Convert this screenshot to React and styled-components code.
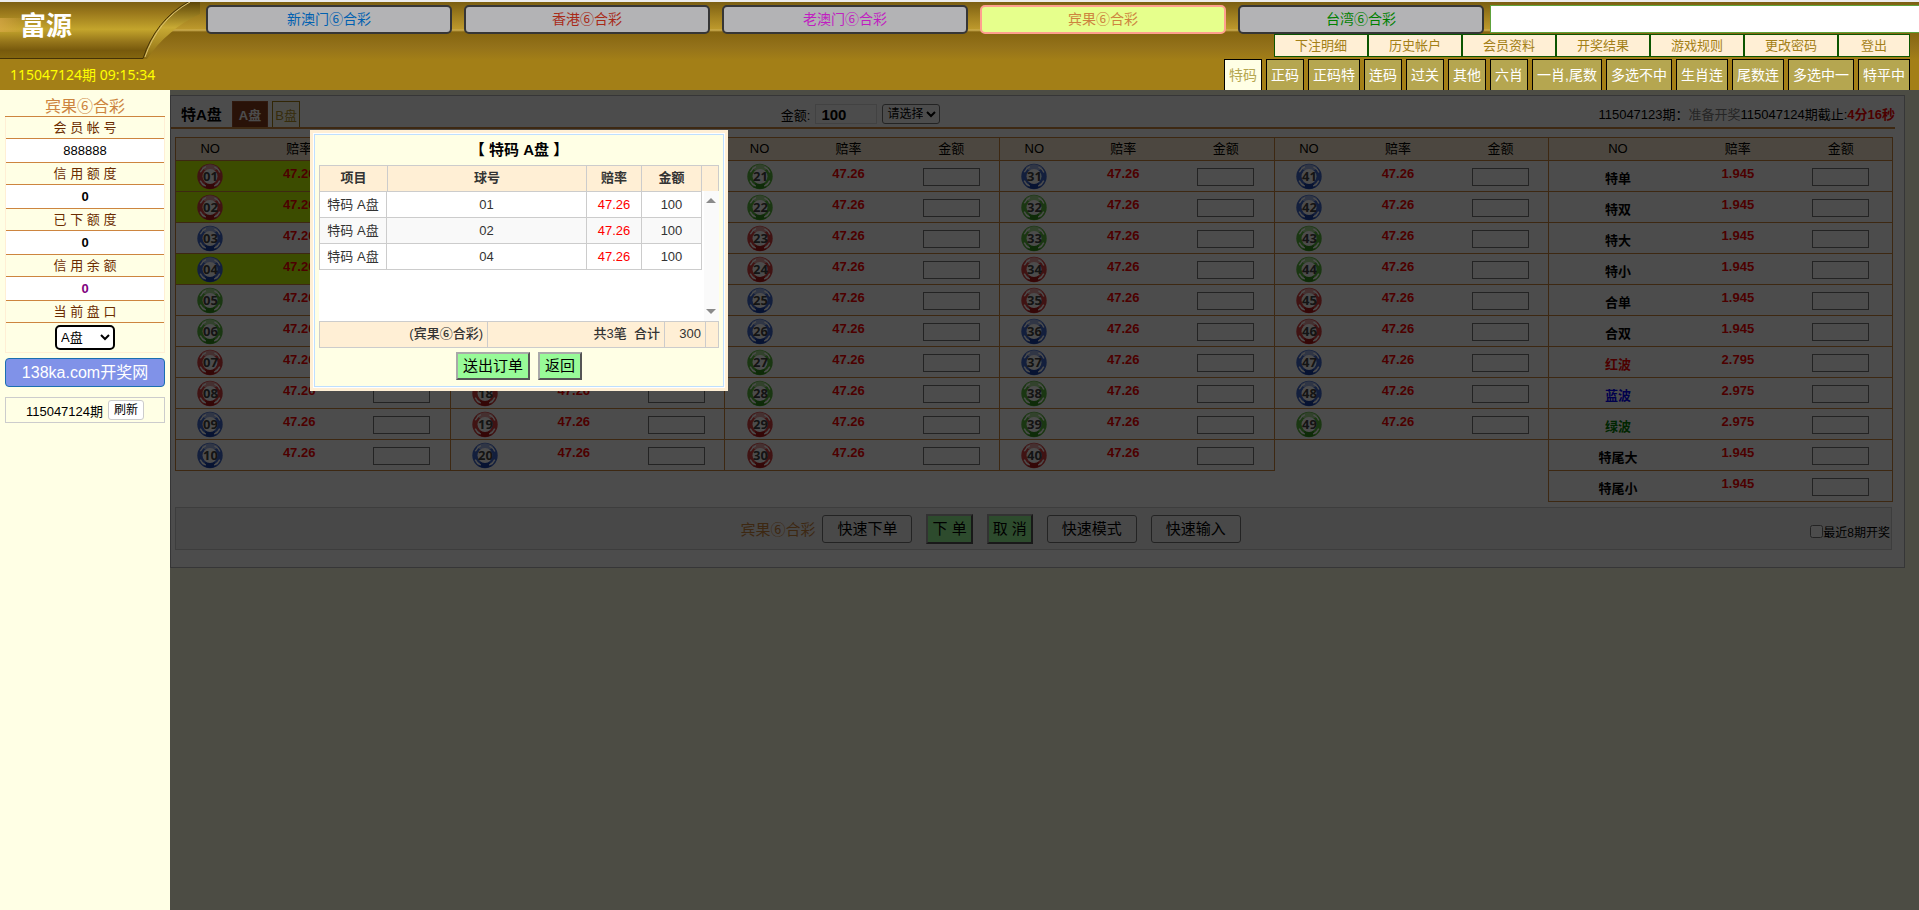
import React, { useState } from "react";
import styled, { createGlobalStyle, css } from "styled-components";

const GlobalStyle = createGlobalStyle`
  * {
    box-sizing: border-box;
  }
  body {
    margin: 0;
    background-color: #ffffe5;
    color: #000;
    font-family: "Liberation Sans", "Noto Sans CJK SC", sans-serif;
    font-size: 13px;
  }
  button, input, select {
    font-family: inherit;
    margin: 0;
  }
`;

// Layout
const Page = styled.div`
  min-height: 100vh;
  display: flex;
  flex-direction: column;
  border-top: 2px solid #ececec;
`;

const Body = styled.div`
  flex: 1;
  display: flex;
`;

// Header
const Header = styled.header`
  display: flex;
  height: 88px;
  background: linear-gradient(
    #7b5f12 0,
    #9d7c1e 13px,
    #bd992c 27px,
    #d0b155 28px,
    #856510 30px,
    #94721a 45px,
    #a37f17 58px
  );
`;

const Brand = styled.div`
  flex: 0 0 206px;
`;

const Logo = styled.h1`
  position: relative;
  height: 57px;
  margin: 0;
  padding-left: 20px;
  color: #fff;
  font-size: 26px;
  line-height: 48px;

  svg {
    position: absolute;
    left: 0;
    top: 0;
  }
  span {
    position: relative;
  }
`;

const Clock = styled.div`
  padding-left: 10px;
  color: #ff0;
  font-family: "Noto Sans", "Noto Sans CJK SC", sans-serif;
  font-size: 14px;
  line-height: 31px;
`;

const HeaderRight = styled.div`
  flex: 1;
  min-width: 0;
  display: flex;
  flex-direction: column;
  align-items: flex-end;
  padding-top: 3px;
`;

const Lotteries = styled.nav`
  width: 100%;
  display: flex;
  gap: 12px;
`;

const LotteryTab = styled.button`
  flex: 0 1 246px;
  height: 29px;
  padding: 0;
  border: 2px solid ${({ $active }) => ($active ? "#ff9f8f" : "#363636")};
  border-radius: 5px;
  background-color: ${({ $active }) => ($active ? "#e6ff8c" : "#b3b3b5")};
  color: ${({ $color }) => $color};
  font-size: 14px;
  line-height: 23px;
  cursor: pointer;
`;

const Notice = styled.div`
  flex: 1;
  height: 28px;
  margin-left: -6px;
  border: 1px solid #5ea23c;
  border-right: none;
  background-color: #fff;
`;

const Menu = styled.nav`
  display: flex;
  margin-right: 9px;
`;

const MenuLink = styled.a`
  width: ${({ $short }) => ($short ? 72 : 94)}px;
  border: 1px solid #0b5500;
  background-color: #ffefd5;
  color: #a37f17;
  line-height: 21px;
  text-align: center;
  text-decoration: none;
`;

const Plays = styled.nav`
  display: flex;
  gap: 4px;
  margin: 2px 9px 0 0;
`;

const PlayLink = styled.a`
  height: 31px;
  padding: 0 4px;
  border: 1px solid #000;
  border-bottom: none;
  background-color: ${({ $active }) => ($active ? "#ffffe5" : "#b5a650")};
  color: ${({ $active }) => ($active ? "#b5a650" : "#fff")};
  font-size: 14px;
  line-height: 31px;
  text-decoration: none;
`;

// Sidebar
const Sidebar = styled.aside`
  flex: 0 0 170px;
  padding: 5px;
  background-color: #ffffe5;
  text-align: center;
`;

const SideTitle = styled.h2`
  height: 22px;
  margin: 0;
  border-bottom: 1px solid #cd853f;
  color: #cd853f;
  font-size: 16px;
  font-weight: normal;
  line-height: 24px;
`;

const Account = styled.dl`
  margin: 0;
  border: 1px solid #ffefd5;
  border-top: none;
`;

const AccountLabel = styled.dt`
  border-bottom: 1px solid #cd853f;
  color: #6b2c00;
  line-height: 21px;
`;

const AccountValue = styled.dd`
  margin: 0;
  border-bottom: 1px solid #cd853f;
  background-color: #fff;
  color: ${({ $color }) => $color || "#000"};
  font-weight: ${({ $bold }) => ($bold ? "bold" : "normal")};
  line-height: 23px;
`;

const AccountSelect = styled.dd`
  margin: 0;
  padding: 2px 0;

  select {
    display: block;
    width: 60px;
    height: 25px;
    margin: 0 auto;
    border: 2px solid #000;
    border-radius: 5px;
    background-color: #fff;
    font-size: 13px;
  }
`;

const SiteLink = styled.a`
  display: block;
  margin-top: 5px;
  border: 1px solid #1a6fb0;
  border-radius: 4px;
  background-color: #8092e8;
  color: #fff;
  font-size: 16px;
  line-height: 27px;
  text-decoration: none;
`;

const Refresh = styled.div`
  display: flex;
  justify-content: center;
  align-items: center;
  gap: 5px;
  height: 26px;
  margin-top: 10px;
  border: 1px solid #ccc;

  button {
    height: 20px;
    padding: 0 5px;
    border: 1px solid #ccc;
    border-radius: 3px;
    background-color: #fff;
    font-size: 12px;
    line-height: 18px;
  }
`;

// Betting panel
const Main = styled.main`
  position: relative;
  flex: 1;
  min-width: 0;
`;

const Panel = styled.section`
  margin: 5px 14px 0 0;
  padding-bottom: 17px;
  border: 1px solid #b4b4b8;
  background-color: #fff;
`;

const Toolbar = styled.div`
  display: grid;
  grid-template-columns: 20% 40% 40%;
  grid-template-rows: 31px;
  margin-right: 9px;
  border-bottom: 2px solid #cd853f;
`;

const ToolbarLeft = styled.div`
  display: flex;
  align-items: flex-end;
  gap: 4px;
  padding-left: 10px;

  strong {
    margin-right: 6px;
    font-size: 15px;
    line-height: 25px;
  }
`;

const PanButton = styled.button`
  height: 26px;
  padding: 0 ${({ $active }) => ($active ? 6 : 2)}px;
  border: 1px solid ${({ $active }) => ($active ? "#a0522d" : "#a37f17")};
  border-bottom: none;
  background-color: ${({ $active }) => ($active ? "#8b3f1c" : "#fffff0")};
  color: ${({ $active }) => ($active ? "#fff" : "#b5932b")};
  font-size: 13px;
  font-weight: ${({ $active }) => ($active ? "bold" : "normal")};
`;

const QuickAmount = styled.div`
  display: flex;
  justify-content: center;
  align-items: center;
  gap: 5px;
  padding-top: 5px;

  input {
    width: 62px;
    height: 20px;
    padding: 0 5px;
    border: 1px solid #ddd;
    font-size: 15px;
    font-weight: bold;
  }
  select {
    width: 58px;
    height: 20px;
    border: 1px solid #767676;
    border-radius: 3px;
    background-color: #fff;
    font-size: 12px;
  }
`;

const Deadline = styled.div`
  text-align: right;
  line-height: 38px;

  span {
    color: #808080;
  }
  strong {
    color: #f00;
  }
`;

const Groups = styled.div`
  display: flex;
  align-items: flex-start;
  margin: 8px 11px 0 4px;
`;

const GroupBox = styled.div`
  flex: ${({ $grow }) => $grow} 1 0;
  min-width: 0;

  & + & {
    margin-left: -1px;
  }
`;

const Table = styled.table`
  width: 100%;
  table-layout: fixed;
  border: 1px solid #cd853f;
  border-bottom: none;
  border-spacing: 0;
`;

const HeadCell = styled.th`
  width: ${({ $width }) => $width};
  height: 23px;
  padding: 0;
  border-bottom: 1px solid #cd853f;
  background-color: #ffefd5;
  font-weight: normal;
  line-height: 21px;
  vertical-align: top;
`;

const Row = styled.tr`
  background-color: ${({ $picked }) => ($picked ? "#c8ff00" : "#fff")};
`;

const Cell = styled.td`
  height: 31px;
  padding: 0;
  border-bottom: 1px solid #cd853f;
  text-align: center;
  vertical-align: top;

  svg {
    display: block;
    margin: 2px auto 0;
  }
  input {
    width: 57px;
    height: 18px;
    margin-top: 7px;
    border: 1px solid #767676;
    background-color: #fff;
    display: inline-block;
    vertical-align: top;
  }
`;

const NameCell = styled(Cell)`
  padding-top: 5px;
  color: ${({ $color }) => $color || "#000"};
  font-weight: bold;
  line-height: 25px;
`;

const RateCell = styled(Cell)`
  color: #f00;
  font-weight: bold;
  line-height: 26px;
`;

const ActionBar = styled.div`
  display: flex;
  align-items: center;
  height: 43px;
  margin: 5px 12px 0 4px;
  padding-right: 1px;
  border: 1px solid #ccc;
  background-color: #f2f2f2;
`;

const Actions = styled.div`
  flex: 1;
  display: flex;
  justify-content: center;
  align-items: center;
  gap: 14px;

  span {
    margin-right: -7px;
    color: #cd853f;
    font-size: 15px;
  }
`;

const PlainButton = styled.button`
  width: 90px;
  height: 28px;
  padding: 0;
  border: 1px solid #767676;
  border-radius: 3px;
  background-color: #f4f4f4;
  color: #000;
  font-size: 15px;
  line-height: 24px;
  cursor: pointer;
`;

const raised = css`
  border: 2px solid;
  border-color: #a9a9a9 #555 #555 #a9a9a9;
  background-color: #98fb98;
  color: #000;
  font-size: 15px;
  cursor: pointer;
`;

const GreenButton = styled.button`
  height: 30px;
  padding: 0 4px;
  line-height: 24px;
  ${raised}
`;

const Recent = styled.label`
  display: flex;
  align-items: center;
  margin-left: 5px;
  padding-top: 5px;
  font-size: 12px;

  input {
    width: 13px;
    height: 13px;
  }
`;

// Order confirmation
const Overlay = styled.div`
  position: absolute;
  inset: 0;
  background-color: rgba(0, 0, 0, 0.7);
`;

const Dialog = styled.div`
  position: absolute;
  left: 140px;
  top: 40px;
  width: 418px;
  padding: 3px;
  border: 1px solid #ffefd5;
  background-color: #ffefd5;
`;

const DialogInner = styled.div`
  padding: 0 4px 6px;
  border: 1px solid #bfdfff;
  outline: 1px solid #fff;
  background-color: #ffffe5;
`;

const DialogTitle = styled.h3`
  margin: 0;
  font-size: 15px;
  line-height: 30px;
  text-align: center;
`;

const OrderTable = styled.table`
  width: 100%;
  table-layout: fixed;
  border-collapse: collapse;
  color: #333;

  th, td {
    height: 26px;
    padding: 0;
    border: 1px solid #ccc;
    line-height: 20px;
    text-align: center;
  }
  th {
    background-color: #ffefd5;
    line-height: 23px;
    vertical-align: top;
  }
`;

const OrderRows = styled.div`
  display: flex;
  height: 130px;
  background-color: #fff;
  margin-top: -1px;

  ${OrderTable} {
    width: 383px;
    align-self: flex-start;
  }
  tr:nth-child(even) {
    background-color: #f9f9f9;
  }
  td:nth-child(3) {
    color: #f00;
  }
`;

const ScrollTrack = styled.div`
  display: flex;
  flex-direction: column;
  justify-content: space-between;
  width: 15px;
  margin-left: auto;
  padding: 7px 2px;
  background-color: #fafafa;
`;

const ScrollArrow = styled.i`
  width: 10px;
  border: 5px solid transparent;
  border-top: ${({ $down }) => ($down ? "5px solid #8a8a8a" : "none")};
  border-bottom: ${({ $down }) => ($down ? "none" : "5px solid #8a8a8a")};
`;

const TotalTable = styled(OrderTable)`
  td {
    padding-right: 4px;
    background-color: #ffefd5;
    font-weight: 500;
    line-height: 23px;
    text-align: right;
    vertical-align: top;
    white-space: pre;
  }
`;

const DialogButtons = styled.div`
  display: flex;
  justify-content: center;
  gap: 8px;
  margin-top: 4px;
`;

const DialogButton = styled.button`
  height: 28px;
  padding: 0 5px;
  line-height: 24px;
  ${raised}
`;

const lotteries = [
  { name: "新澳门⑥合彩", color: "#0060b0" },
  { name: "香港⑥合彩", color: "#a82a18" },
  { name: "老澳门⑥合彩", color: "#c01fc0" },
  { name: "宾果⑥合彩", color: "#cd853f", active: true },
  { name: "台湾⑥合彩", color: "#008000" },
];

const menu = ["下注明细", "历史帐户", "会员资料", "开奖结果", "游戏规则", "更改密码", "登出"];

const plays = [
  "特码", "正码", "正码特", "连码", "过关", "其他", "六肖",
  "一肖,尾数", "多选不中", "生肖连", "尾数连", "多选中一", "特平中",
];

const account = [
  { label: "会 员 帐 号", value: "888888" },
  { label: "信 用 额 度", value: "0", bold: true },
  { label: "已 下 额 度", value: "0", bold: true },
  { label: "信 用 余 额", value: "0", bold: true, color: "#800080" },
];

const sides = [
  { name: "特单", rate: "1.945" },
  { name: "特双", rate: "1.945" },
  { name: "特大", rate: "1.945" },
  { name: "特小", rate: "1.945" },
  { name: "合单", rate: "1.945" },
  { name: "合双", rate: "1.945" },
  { name: "红波", rate: "2.795", color: "#f00" },
  { name: "蓝波", rate: "2.975", color: "#00f" },
  { name: "绿波", rate: "2.975", color: "#008000" },
  { name: "特尾大", rate: "1.945" },
  { name: "特尾小", rate: "1.945" },
];

const RED = [1, 2, 7, 8, 12, 13, 18, 19, 23, 24, 29, 30, 34, 35, 40, 45, 46];
const BLUE = [3, 4, 9, 10, 14, 15, 20, 25, 26, 31, 36, 37, 41, 42, 47, 48];

const pad = (n) => String(n).padStart(2, "0");

const numberGroups = [0, 1, 2, 3, 4].map((g) =>
  Array.from({ length: g === 4 ? 9 : 10 }, (_, i) => g * 10 + i + 1)
);

const ballTone = (n) => {
  if (RED.includes(n)) return { main: "#d84040", dark: "#b01818", light: "#e8a0a0" };
  if (BLUE.includes(n)) return { main: "#4068cc", dark: "#1840a8", light: "#a0b4e8" };
  return { main: "#58b83c", dark: "#30921c", light: "#a8dc94" };
};

const Ball = ({ n }) => {
  const tone = ballTone(n);
  return (
    <svg width="26" height="27" viewBox="0 0 26 27">
      <circle cx="13" cy="13.5" r="12.7" fill={tone.main} />
      <path d="M4.5 5 Q13 -2.5 21.5 5 L17 8 H9 Z" fill={tone.light} />
      <path d="M8.5 20 H17.5 L19.5 24 Q13 28 6.5 24 Z" fill={tone.dark} />
      {/* white wedges on the four diagonals */}
      <circle
        cx="13"
        cy="13.5"
        r="10.6"
        fill="none"
        stroke="#fff"
        strokeWidth="1.4"
        strokeDasharray="8 8.65"
        transform="rotate(23 13 13.5)"
      />
      <circle cx="13" cy="13.5" r="7.5" fill="#fff" />
      <text
        x="13.5"
        y="18"
        textAnchor="middle"
        fontFamily="Noto Sans, sans-serif"
        fontSize="13"
        fontWeight="bold"
        fill="#444"
      >
        {pad(n)}
      </text>
    </svg>
  );
};

const LogoArt = () => (
  <svg width="200" height="57" viewBox="0 0 200 57" aria-hidden="true">
    <defs>
      <linearGradient id="gold" x1="0" y1="0" x2="0" y2="1">
        <stop offset="0" stopColor="#7c5f12" />
        <stop offset="0.2" stopColor="#9c7a1c" />
        <stop offset="0.48" stopColor="#c4a52c" />
        <stop offset="0.7" stopColor="#94741a" />
        <stop offset="0.85" stopColor="#77590c" />
        <stop offset="1" stopColor="#85670f" />
      </linearGradient>
      <linearGradient id="glow" x1="0" y1="0" x2="1" y2="0">
        <stop offset="0" stopColor="#d8a848" stopOpacity="0.7" />
        <stop offset="1" stopColor="#d8a848" stopOpacity="0" />
      </linearGradient>
      <linearGradient id="curl" x1="0" y1="0" x2="0" y2="1">
        <stop offset="0" stopColor="#5c4508" />
        <stop offset="0.45" stopColor="#c8aa34" />
        <stop offset="1" stopColor="#8c6c12" />
      </linearGradient>
    </defs>
    <path d="M186 0 H200 V12 C178 22 160 38 147 57 H143 C151 32 166 12 186 0 Z" fill="url(#curl)" />
    <path d="M0 0 H188 C166 12 151 32 143 57 H0 Z" fill="url(#gold)" />
    <rect x="0" y="16" width="28" height="14" fill="url(#glow)" />
    <path d="M0 56.5 H143 C151 32 166 12 188 0" fill="none" stroke="#453206" strokeWidth="1" />
    <path d="M145 55 C153 32 168 12 190 0" fill="none" stroke="#dcc474" strokeWidth="1" />
  </svg>
);

const BetTable = ({ widths, children }) => (
  <Table>
    <thead>
      <tr>
        <HeadCell $width={widths[0]}>NO</HeadCell>
        <HeadCell $width={widths[1]}>赔率</HeadCell>
        <HeadCell $width={widths[2]}>金额</HeadCell>
      </tr>
    </thead>
    <tbody>{children}</tbody>
  </Table>
);

const OrderDialog = ({ picks, amount, onClose }) => (
  <Overlay>
    <Dialog role="dialog" aria-label="特码 A盘">
      <DialogInner>
        <DialogTitle>【 特码 A盘 】</DialogTitle>
        <OrderTable>
          <colgroup>
            <col width="68" />
            <col />
            <col width="55" />
            <col width="60" />
            <col width="17" />
          </colgroup>
          <thead>
            <tr>
              <th>项目</th>
              <th>球号</th>
              <th>赔率</th>
              <th>金额</th>
              <th />
            </tr>
          </thead>
        </OrderTable>
        <OrderRows>
          <OrderTable>
            <colgroup>
              <col width="67" />
              <col />
              <col width="55" />
              <col width="60" />
            </colgroup>
            <tbody>
              {picks.map((n) => (
                <tr key={n}>
                  <td>特码 A盘</td>
                  <td>{pad(n)}</td>
                  <td>47.26</td>
                  <td>{amount}</td>
                </tr>
              ))}
            </tbody>
          </OrderTable>
          <ScrollTrack>
            <ScrollArrow />
            <ScrollArrow $down />
          </ScrollTrack>
        </OrderRows>
        <TotalTable>
          <colgroup>
            <col width="168" />
            <col />
            <col width="41" />
            <col width="13" />
          </colgroup>
          <tbody>
            <tr>
              <td>(宾果⑥合彩)</td>
              <td>{`共${picks.length}笔  合计`}</td>
              <td>{amount * picks.length}</td>
              <td />
            </tr>
          </tbody>
        </TotalTable>
        <DialogButtons>
          <DialogButton type="button">送出订单</DialogButton>
          <DialogButton type="button" onClick={onClose}>返回</DialogButton>
        </DialogButtons>
      </DialogInner>
    </Dialog>
  </Overlay>
);

const App = () => {
  const [open, setOpen] = useState(true);
  const [amount, setAmount] = useState(100);
  const picks = [1, 2, 4];

  return (
    <>
      <GlobalStyle />
      <Page>
        <Header>
          <Brand>
            <Logo>
              <LogoArt />
              <span>富源</span>
            </Logo>
            <Clock>115047124期 09:15:34</Clock>
          </Brand>
          <HeaderRight>
            <Lotteries>
              {lotteries.map((l) => (
                <LotteryTab key={l.name} type="button" $color={l.color} $active={l.active}>
                  {l.name}
                </LotteryTab>
              ))}
              <Notice />
            </Lotteries>
            <Menu>
              {menu.map((name) => (
                <MenuLink key={name} href="#" $short={name === "登出"}>{name}</MenuLink>
              ))}
            </Menu>
            <Plays>
              {plays.map((name, i) => (
                <PlayLink key={name} href="#" $active={i === 0}>{name}</PlayLink>
              ))}
            </Plays>
          </HeaderRight>
        </Header>

        <Body>
          <Sidebar>
            <SideTitle>宾果⑥合彩</SideTitle>
            <Account>
              {account.map((item) => (
                <React.Fragment key={item.label}>
                  <AccountLabel>{item.label}</AccountLabel>
                  <AccountValue $bold={item.bold} $color={item.color}>{item.value}</AccountValue>
                </React.Fragment>
              ))}
              <AccountLabel>当 前 盘 口</AccountLabel>
              <AccountSelect>
                <select aria-label="当前盘口">
                  <option>A盘</option>
                  <option>B盘</option>
                </select>
              </AccountSelect>
            </Account>
            <SiteLink href="#">138ka.com开奖网</SiteLink>
            <Refresh>
              115047124期
              <button type="button">刷新</button>
            </Refresh>
          </Sidebar>

          <Main>
            <Panel>
              <Toolbar>
                <ToolbarLeft>
                  <strong>特A盘</strong>
                  <PanButton type="button" $active>A盘</PanButton>
                  <PanButton type="button">B盘</PanButton>
                </ToolbarLeft>
                <QuickAmount>
                  <label htmlFor="amount">金额:</label>
                  <input
                    id="amount"
                    value={amount}
                    onChange={(e) => setAmount(Number(e.target.value) || 0)}
                  />
                  <select aria-label="请选择">
                    <option>请选择</option>
                  </select>
                </QuickAmount>
                <Deadline>
                  115047123期：<span>准备开奖</span>115047124期截止:<strong>4分16秒</strong>
                </Deadline>
              </Toolbar>

              <Groups>
                {numberGroups.map((numbers) => (
                  <GroupBox key={numbers[0]} $grow={16}>
                    <BetTable widths={["25%", "40%", "35%"]}>
                      {numbers.map((n) => (
                        <Row key={n} $picked={picks.includes(n)}>
                          <Cell><Ball n={n} /></Cell>
                          <RateCell>47.26</RateCell>
                          <Cell><input aria-label={`${pad(n)} 金额`} /></Cell>
                        </Row>
                      ))}
                    </BetTable>
                  </GroupBox>
                ))}
                <GroupBox $grow={20}>
                  <BetTable widths={["40%", "30%", "30%"]}>
                    {sides.map((s) => (
                      <Row key={s.name}>
                        <NameCell $color={s.color}>{s.name}</NameCell>
                        <RateCell>{s.rate}</RateCell>
                        <Cell><input aria-label={`${s.name} 金额`} /></Cell>
                      </Row>
                    ))}
                  </BetTable>
                </GroupBox>
              </Groups>

              <ActionBar>
                <Actions>
                  <span>宾果⑥合彩</span>
                  <PlainButton type="button">快速下单</PlainButton>
                  <GreenButton type="button" onClick={() => setOpen(true)}>下 单</GreenButton>
                  <GreenButton type="button">取 消</GreenButton>
                  <PlainButton type="button">快速模式</PlainButton>
                  <PlainButton type="button">快速输入</PlainButton>
                </Actions>
                <Recent>
                  <input type="checkbox" />
                  最近8期开奖
                </Recent>
              </ActionBar>
            </Panel>

            {open && <OrderDialog picks={picks} amount={amount} onClose={() => setOpen(false)} />}
          </Main>
        </Body>
      </Page>
    </>
  );
};

export default App;
